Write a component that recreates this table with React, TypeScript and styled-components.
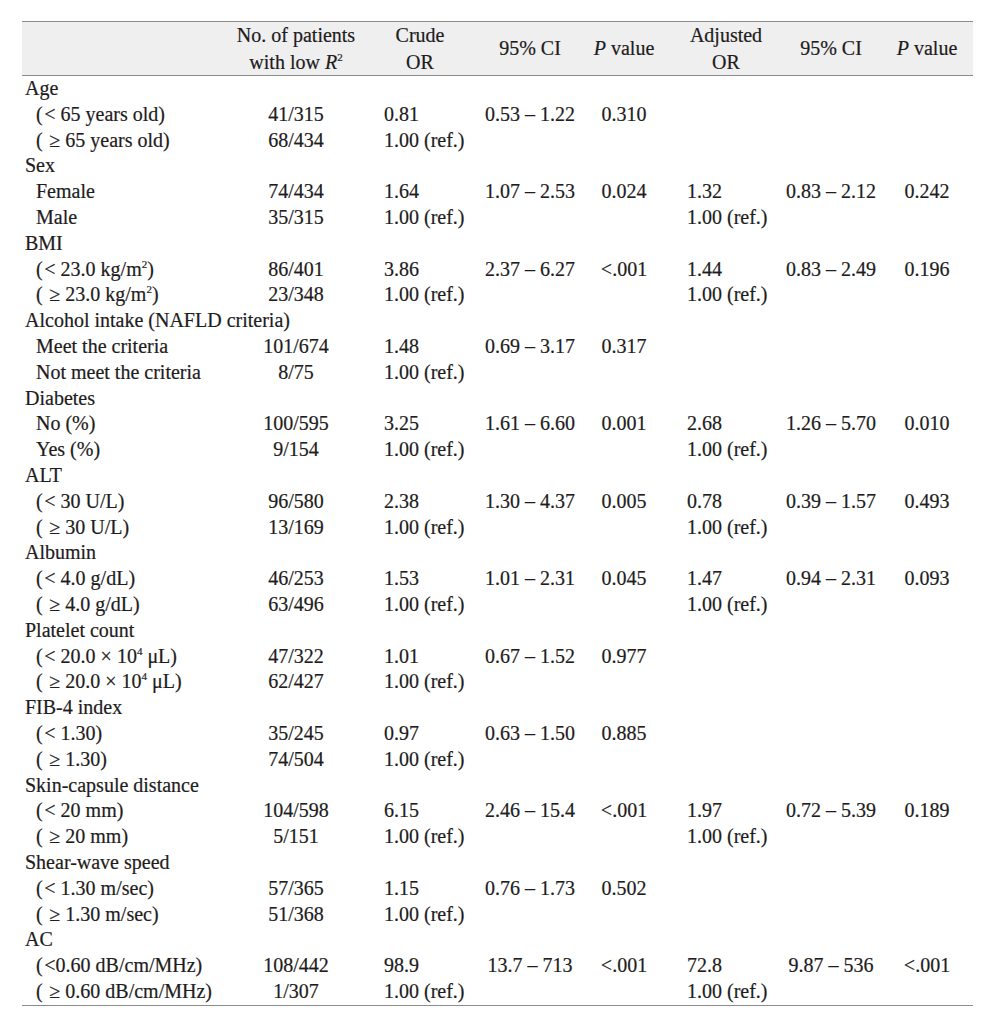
import React from 'react'
import styled, { createGlobalStyle } from 'styled-components'

const GlobalStyle = createGlobalStyle`
  html, body {
    margin: 0;
    padding: 0;
    background: #ffffff;
  }
  body {
    font-family: 'Liberation Serif', 'Times New Roman', 'Noto Sans CJK JP', serif;
    color: #1e1c1c;
    -webkit-text-stroke: 0.2px #1e1c1c;
  }
`

const Page = styled.div`
  padding: 21px 0 0 22px;
`

const Table = styled.table`
  width: 951px;
  border-collapse: collapse;
  table-layout: fixed;
  font-size: 20px;
  border-bottom: 1.5px solid #8c8c8c;
`

const HeadRow = styled.tr`
  background: #efefef;
  border-top: 1.5px solid #8c8c8c;
  border-bottom: 1.5px solid #8c8c8c;
`

const HeadCell = styled.th`
  font-weight: normal;
  text-align: center;
  vertical-align: middle;
  line-height: 26.5px;
  padding: 0;
  white-space: nowrap;
`

const Cell = styled.td<{ $align?: 'left' | 'center'; $pad?: number }>`
  text-align: ${(p) => p.$align || 'center'};
  padding: 0 0 0 ${(p) => p.$pad || 0}px;
  height: 25.8px;
  line-height: 25.8px;
  white-space: nowrap;
`

const Label = styled.td<{ $sub?: boolean }>`
  padding: 0 0 0 ${(p) => (p.$sub ? 14 : 3)}px;
  height: 25.8px;
  line-height: 25.8px;
  white-space: nowrap;
`

const Ital = styled.i`
  font-style: italic;
`

const Sup = styled.sup`
  font-size: 11px;
  line-height: 0;
  vertical-align: 8px;
`

type Sub = {
  label: React.ReactNode
  n: string
  crude?: string
  ci?: string
  p?: string
  adj?: string
  aci?: string
  ap?: string
}

type Group = { title: string; rows: Sub[] }

const REF = '1.00\u2005(ref.)'
const LT = '(\u200A<'
const GE = '(\u2004≥'

const groups: Group[] = [
  {
    title: 'Age',
    rows: [
      { label: `${LT} 65 years old)`, n: '41/315', crude: '0.81', ci: '0.53 – 1.22', p: '0.310' },
      { label: `${GE} 65 years old)`, n: '68/434', crude: REF },
    ],
  },
  {
    title: 'Sex',
    rows: [
      { label: 'Female', n: '74/434', crude: '1.64', ci: '1.07 – 2.53', p: '0.024', adj: '1.32', aci: '0.83 – 2.12', ap: '0.242' },
      { label: 'Male', n: '35/315', crude: REF, adj: REF },
    ],
  },
  {
    title: 'BMI',
    rows: [
      { label: <>{`${LT} 23.0 kg/m`}<Sup>2</Sup>)</>, n: '86/401', crude: '3.86', ci: '2.37 – 6.27', p: '<.001', adj: '1.44', aci: '0.83 – 2.49', ap: '0.196' },
      { label: <>{`${GE} 23.0 kg/m`}<Sup>2</Sup>)</>, n: '23/348', crude: REF, adj: REF },
    ],
  },
  {
    title: 'Alcohol intake\u2005(NAFLD criteria)',
    rows: [
      { label: 'Meet the criteria', n: '101/674', crude: '1.48', ci: '0.69 – 3.17', p: '0.317' },
      { label: 'Not meet the criteria', n: '8/75', crude: REF },
    ],
  },
  {
    title: 'Diabetes',
    rows: [
      { label: 'No\u2005(%)', n: '100/595', crude: '3.25', ci: '1.61 – 6.60', p: '0.001', adj: '2.68', aci: '1.26 – 5.70', ap: '0.010' },
      { label: 'Yes\u2005(%)', n: '9/154', crude: REF, adj: REF },
    ],
  },
  {
    title: 'ALT',
    rows: [
      { label: `${LT} 30 U/L)`, n: '96/580', crude: '2.38', ci: '1.30 – 4.37', p: '0.005', adj: '0.78', aci: '0.39 – 1.57', ap: '0.493' },
      { label: `${GE} 30 U/L)`, n: '13/169', crude: REF, adj: REF },
    ],
  },
  {
    title: 'Albumin',
    rows: [
      { label: `${LT} 4.0 g/dL)`, n: '46/253', crude: '1.53', ci: '1.01 – 2.31', p: '0.045', adj: '1.47', aci: '0.94 – 2.31', ap: '0.093' },
      { label: `${GE} 4.0 g/dL)`, n: '63/496', crude: REF, adj: REF },
    ],
  },
  {
    title: 'Platelet count',
    rows: [
      { label: <>{`${LT} 20.0 × 10`}<Sup>4</Sup>{' μL)'}</>, n: '47/322', crude: '1.01', ci: '0.67 – 1.52', p: '0.977' },
      { label: <>{`${GE} 20.0 × 10`}<Sup>4</Sup>{' μL)'}</>, n: '62/427', crude: REF },
    ],
  },
  {
    title: 'FIB-4 index',
    rows: [
      { label: `${LT} 1.30)`, n: '35/245', crude: '0.97', ci: '0.63 – 1.50', p: '0.885' },
      { label: `${GE} 1.30)`, n: '74/504', crude: REF },
    ],
  },
  {
    title: 'Skin-capsule distance',
    rows: [
      { label: `${LT} 20 mm)`, n: '104/598', crude: '6.15', ci: '2.46 – 15.4', p: '<.001', adj: '1.97', aci: '0.72 – 5.39', ap: '0.189' },
      { label: `${GE} 20 mm)`, n: '5/151', crude: REF, adj: REF },
    ],
  },
  {
    title: 'Shear-wave speed',
    rows: [
      { label: `${LT} 1.30 m/sec)`, n: '57/365', crude: '1.15', ci: '0.76 – 1.73', p: '0.502' },
      { label: `${GE} 1.30 m/sec)`, n: '51/368', crude: REF },
    ],
  },
  {
    title: 'AC',
    rows: [
      { label: `${LT}0.60 dB/cm/MHz)`, n: '108/442', crude: '98.9', ci: '13.7 – 713', p: '<.001', adj: '72.8', aci: '9.87 – 536', ap: '<.001' },
      { label: `${GE} 0.60 dB/cm/MHz)`, n: '1/307', crude: REF, adj: REF },
    ],
  },
]

const widths = [213, 122, 126, 94, 94, 110, 100, 92]

const App = () => {
  return (
    <Page>
      <GlobalStyle />
      <Table>
        <colgroup>
          {widths.map((w, i) => (
            <col key={i} style={{ width: w }} />
          ))}
        </colgroup>
        <thead>
          <HeadRow>
            <HeadCell />
            <HeadCell>
              No. of patients
              <br />
              with low <Ital>R</Ital>
              <Sup>2</Sup>
            </HeadCell>
            <HeadCell>
              Crude
              <br />
              OR
            </HeadCell>
            <HeadCell>95% CI</HeadCell>
            <HeadCell>
              <Ital>P</Ital> value
            </HeadCell>
            <HeadCell>
              Adjusted
              <br />
              OR
            </HeadCell>
            <HeadCell>95% CI</HeadCell>
            <HeadCell>
              <Ital>P</Ital> value
            </HeadCell>
          </HeadRow>
        </thead>
        <tbody>
          {groups.map((g) => (
            <React.Fragment key={g.title}>
              <tr>
                <Label colSpan={8}>{g.title}</Label>
              </tr>
              {g.rows.map((r, i) => (
                <tr key={i}>
                  <Label $sub>{r.label}</Label>
                  <Cell>{r.n}</Cell>
                  <Cell $align="left" $pad={27}>{r.crude}</Cell>
                  <Cell>{r.ci}</Cell>
                  <Cell>{r.p}</Cell>
                  <Cell $align="left" $pad={16}>{r.adj}</Cell>
                  <Cell>{r.aci}</Cell>
                  <Cell>{r.ap}</Cell>
                </tr>
              ))}
            </React.Fragment>
          ))}
        </tbody>
      </Table>
    </Page>
  )
}

export default App
